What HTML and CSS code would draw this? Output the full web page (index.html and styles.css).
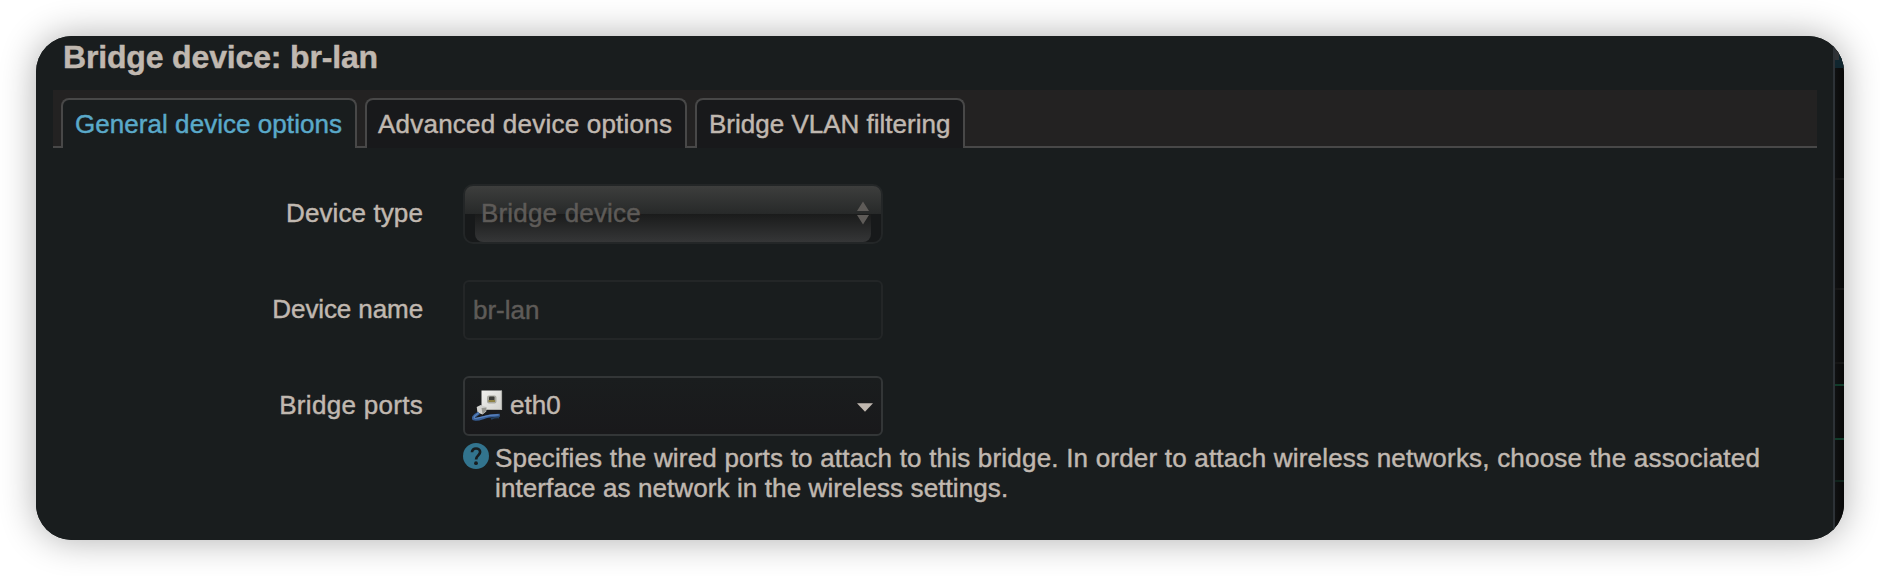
FILE: index.html
```html
<!DOCTYPE html>
<html lang="en">
<head>
<meta charset="utf-8">
<title>Bridge device: br-lan</title>
<link rel="stylesheet" href="styles.css">
</head>
<body>
<div class="window">
  <main class="dialog">
    <h1 class="title">Bridge device: br-lan</h1>
    <nav class="tabs">
      <a class="tab tab-general">General device options</a>
      <a class="tab tab-advanced">Advanced device options</a>
      <a class="tab tab-vlan">Bridge VLAN filtering</a>
    </nav>
    <form class="form">
      <label class="label">Device type</label>
      <div class="control select">
        <span>Bridge device</span>
        <svg class="updown" width="12" height="24" viewBox="0 0 12 24"><path d="M6 0.5L12 10H0zM6 23.5L0 14h12z" fill="#5e5b58"/></svg>
      </div>
      <label class="label label-name">Device name</label>
      <div class="control input">br-lan</div>
      <label class="label label-ports">Bridge ports</label>
      <div class="control dropdown">
        <svg class="port" width="32" height="32" viewBox="0 0 32 32">
          <defs><linearGradient id="plate" x1="0" y1="0" x2="1" y2="1"><stop offset="0" stop-color="#f0f0ee"/><stop offset="1" stop-color="#d2d2cd"/></linearGradient></defs>
          <rect x="9.500" y="0.500" width="20.500" height="19.500" fill="url(#plate)"/>
          <path d="M29.500 1v18.500H11" fill="none" stroke="#b2b2ad" stroke-width="1.2"/>
          <rect x="15" y="5.500" width="9.500" height="8" rx="2" fill="#a9a9a1"/>
          <rect x="17" y="6.500" width="5.500" height="4" rx="1" fill="#3c3c38"/>
          <rect x="16.500" y="10" width="6.500" height="2" fill="#8f8345"/>
          <path d="M4.700 17l4-2 6 2-.5 4.500-3.700 3-5-2z" fill="#d2d2cf"/>
          <path d="M9.500 18l5-.5-.5 3.500-3.500 3z" fill="#96968f"/>
          <path d="M7 23C4 25 0 27 1.800 29c3.500 1.600 9-1.500 14-2.600 4-.9 7-1 12-1.200" fill="none" stroke="#375f98" stroke-width="3"/>
          <path d="M6.500 23C4 25 1 26.800 2.500 28.200c5 1 10-3.500 24-3.300" fill="none" stroke="#5b84bf" stroke-width="1.300"/>
          <path d="M19 29q4-1.800 8-1.500" fill="none" stroke="#24405f" stroke-width="1.800"/>
        </svg>
        <span class="port-name">eth0</span>
        <svg class="caret" width="16" height="9" viewBox="0 0 16 9"><path d="M0 .3h16L8 8.700z" fill="#c0b8b0"/></svg>
      </div>
      <div class="help">
        <svg class="help-icon" width="26" height="26" viewBox="0 0 26 26">
          <circle cx="13" cy="13" r="13" fill="#32748e"/>
          <path d="M9 9.300C9 6.900 10.700 5.500 13 5.500s4.100 1.400 4.100 3.600c0 3.200-4 3.500-4 7.400" fill="none" stroke="#181d1f" stroke-width="2.700"/>
          <circle cx="13" cy="20.200" r="1.900" fill="#181d1f"/>
        </svg>
        <p class="help-text">Specifies the wired ports to attach to this bridge. In order to attach wireless networks, choose the associated<br><span class="help-end">interface as network in the wireless settings.</span></p>
      </div>
    </form>
  </main>
  <aside class="backdrop">
    <svg width="9" height="504" viewBox="0 0 9 504">
      <path d="M0 0h4v24H0z" fill="#303336"/>
      <path d="M4 0h5v32H0v-8h4z" fill="#10262f"/>
      <path d="M0 142h9v2H0zM0 252h9v2H0zM0 326h9v2H0z" fill="#161616"/>
      <path d="M0 348h9v2H0zM0 402h9v2H0z" fill="#113b2a"/>
      <path d="M0 444h9v2H0z" fill="#10231c"/>
    </svg>
  </aside>
</div>
</body>
</html>
```
FILE: styles.css
```css
* { box-sizing: border-box; }

body {
  margin: 0;
  height: 576px;
  padding: 36px;
  overflow: hidden;
  background: #fff;
  color: #c0b8b0;
  font: 26px/30px "Liberation Sans", Arial, sans-serif;
  -webkit-text-stroke: 0.45px currentColor;
}

.window {
  display: flex;
  width: 1808px;
  height: 504px;
  border-radius: 36px;
  overflow: hidden;
  background: #191d1e;
  box-shadow: 0 0 36px rgba(0, 0, 0, 0.32);
}

.dialog {
  width: 1799px;
  padding: 0 16px 0 17px;
  border-right: 2px solid #2d3237;
  background: #191d1e;
}

.backdrop {
  width: 9px;
  background: linear-gradient(90deg, #101112, #080808);
}

.backdrop svg { display: block; }

.title {
  margin: 0;
  height: 54px;
  padding: 3px 0 0 10px;
  font-size: 32px;
  line-height: 36px;
  font-weight: bold;
  letter-spacing: -0.16px;
}

.tabs {
  display: flex;
  align-items: flex-start;
  gap: 8px;
  height: 58px;
  padding: 8px 8px 0;
  background: #232222;
  border-bottom: 2px solid #484848;
}

.tab {
  height: 50px;
  padding: 9px 0 0 12px;
  border: 2px solid #484848;
  border-bottom: 0;
  border-radius: 8px 8px 0 0;
  background: #18191b;
  white-space: nowrap;
}

.tab-general {
  width: 296px;
  background: #191d1e;
  color: #5aa9c9;
  letter-spacing: 0.05px;
}

.tab-advanced {
  width: 322px;
  padding-left: 11px;
  letter-spacing: 0.22px;
}

.tab-vlan {
  width: 270px;
}

.form {
  display: grid;
  grid-template-columns: 370px 420px;
  column-gap: 40px;
  row-gap: 36px;
  padding-top: 36px;
}

.label {
  padding-top: 14px;
  text-align: right;
  letter-spacing: 0.1px;
}

.label-name { letter-spacing: -0.1px; }

.label-ports { letter-spacing: 0.3px; }

.control {
  display: flex;
  align-items: center;
  width: 420px;
  height: 60px;
  border: 2px solid #232627;
  border-radius: 6px;
}

.select {
  position: relative;
  justify-content: space-between;
  padding: 0 12px 2px 16px;
  border-radius: 10px;
  background: linear-gradient(#3d3e3d, #272929) 0 0 / 100% 28px no-repeat, #17191a;
  color: #5e5b58;
  letter-spacing: 0.18px;
}

.select::before {
  content: "";
  position: absolute;
  inset: 28px 10px 0;
  border-radius: 0 0 8px 8px;
  background: linear-gradient(#1a1b1b, #353637);
}

.select span,
.updown { position: relative; }

.input {
  padding: 0 8px;
  color: #5e5b58;
}

.dropdown {
  padding: 0 8px 0 7px;
  border-color: #333637;
  background: linear-gradient(#1a1d1e, #19191b);
}

.port-name { margin: 0 auto 2px 6px; }

.caret { margin-top: 2px; }

.help {
  grid-column: 2;
  display: flex;
  gap: 6px;
  margin-top: -29px;
}

.help-icon { flex: none; }

.help-text {
  margin: 0;
  white-space: nowrap;
  letter-spacing: 0.2px;
}

.help-end { letter-spacing: 0.1px; }
```
